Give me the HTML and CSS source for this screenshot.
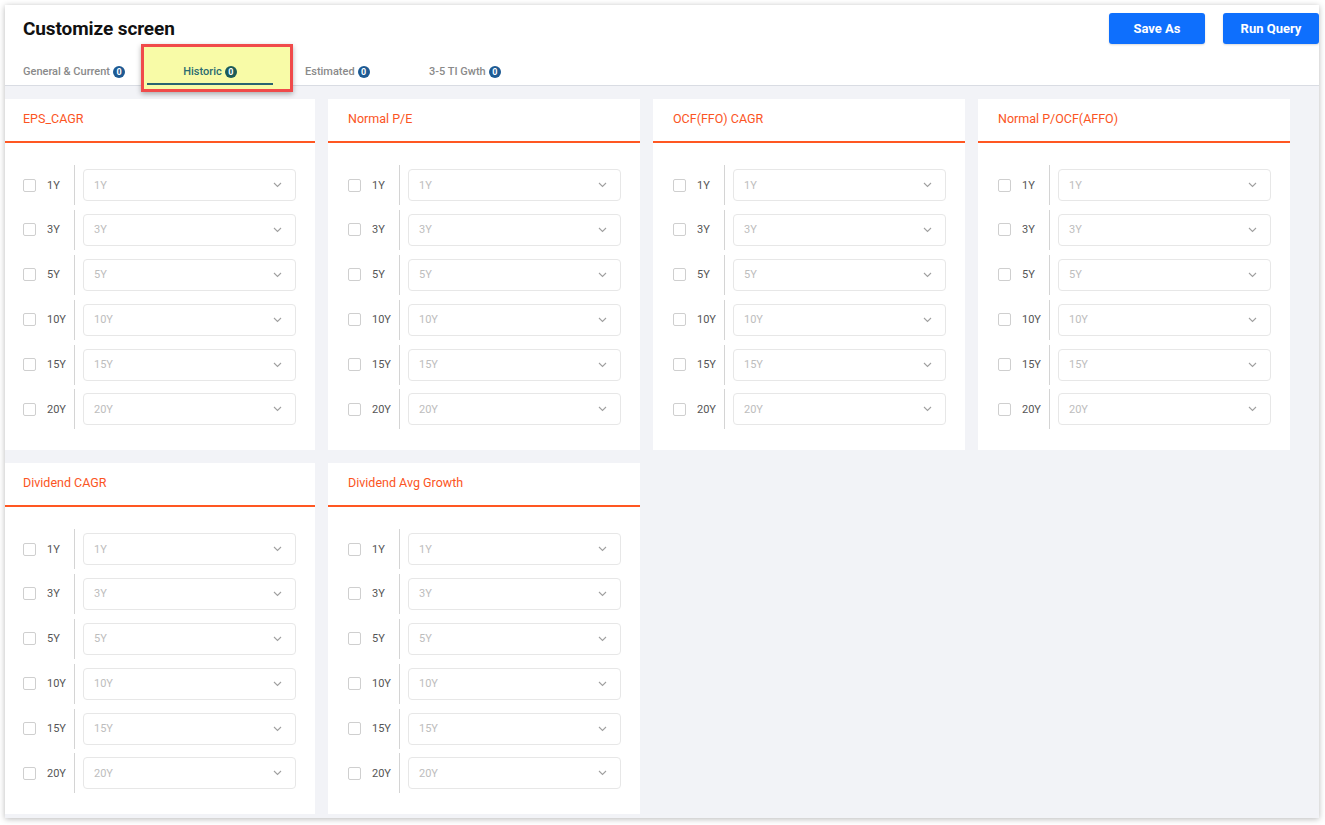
FILE: index.html
```html
<!DOCTYPE html>
<html>
<head>
<meta charset="utf-8">
<link rel="stylesheet" href="styles.css">
</head>
<body>
<div class="window">
  <header class="head">
    <div class="head-left">
      <h1 class="title">Customize screen</h1>
      <nav class="tabs">
        <div class="tab tab-general">General &amp; Current <span class="badge">0</span></div>
        <div class="tab tab-historic active">Historic <span class="badge">0</span></div>
        <div class="tab tab-estimated">Estimated <span class="badge">0</span></div>
        <div class="tab tab-gwth">3-5 TI Gwth <span class="badge">0</span></div>
      </nav>
    </div>
    <div class="head-actions">
      <button class="btn">Save As</button>
      <button class="btn">Run Query</button>
    </div>
  </header>
  <main class="content">
    <div class="grid" id="grid"></div>
  </main>
</div>
<script src="app.js"></script>
</body>
</html>
```
FILE: app.js
```js
const titles = ["EPS_CAGR", "Normal P/E", "OCF(FFO) CAGR", "Normal P/OCF(AFFO)", "Dividend CAGR", "Dividend Avg Growth"];
const periods = ["1Y", "3Y", "5Y", "10Y", "15Y", "20Y"];
const chevron = '<svg class="chev" width="9" height="6" viewBox="0 0 9 6"><polyline points="1,1 4.5,4.5 8,1" fill="none" stroke="#a0a0a0" stroke-width="1.1"/></svg>';
const grid = document.getElementById("grid");
grid.innerHTML = titles.map(t => `
  <section class="card">
    <div class="card-head">${t}</div>
    <div class="card-body">
      ${periods.map(p => `
        <div class="row">
          <span class="check"></span>
          <span class="label">${p}</span>
          <span class="divider"></span>
          <div class="select"><span>${p}</span>${chevron}</div>
        </div>`).join("")}
    </div>
  </section>`).join("");
```
FILE: styles.css
```css
* { box-sizing: border-box; }
html, body { margin: 0; padding: 0; background: #ffffff; }
body {
  font-family: Roboto, "Liberation Sans", Arial, sans-serif;
  color: #222;
  width: 1325px;
  height: 825px;
  overflow: hidden;
}
.window {
  margin: 5px 0 0 5px;
  width: 1314px;
  height: 813px;
  background: #f2f3f7;
  box-shadow: 0 1px 6px rgba(0, 0, 0, 0.28);
  overflow: hidden;
  display: flex;
  flex-direction: column;
}
.head {
  background: #fff;
  height: 81px;
  border-bottom: 1px solid #d9dce3;
  display: flex;
  justify-content: space-between;
  align-items: flex-start;
  flex-shrink: 0;
}
.head-left { padding-left: 18px; }
.title {
  margin: 12px 0 0 0;
  font-size: 19px;
  line-height: 24px;
  font-weight: 700;
  color: #111;
  letter-spacing: -0.1px;
}
.tabs {
  display: flex;
  margin-top: 18px;
  height: 26px;
}
.tab {
  font-size: 11px;
  font-weight: 500;
  color: #8a8a8a;
  line-height: 24px;
  white-space: nowrap;
  display: flex;
  align-items: center;
  height: 26px;
}
.tab-general { width: 124px; }
.tab-historic { width: 126px; justify-content: center; }
.tab-estimated { width: 124px; margin-left: 32px; }
.badge {
  display: inline-flex;
  align-items: center;
  justify-content: center;
  width: 12px;
  height: 12px;
  border-radius: 50%;
  background: #1d5a93;
  color: #fff;
  font-size: 9px;
  font-weight: 700;
  margin-left: 3px;
  line-height: 1;
}
.tab.active {
  position: relative;
  z-index: 0;
  color: #2b6c70;
}
.tab.active .badge { background: #1b5b59; }
.tab.active::before {
  content: "";
  position: absolute;
  left: -6px;
  right: -20px;
  top: -15px;
  bottom: -7px;
  background: #f8fba7;
  border: 3px solid #f04a4a;
  box-shadow: 0 2px 5px rgba(0, 0, 0, 0.3);
  z-index: -1;
}
.tab.active::after {
  content: "";
  position: absolute;
  left: 0;
  right: 0;
  bottom: 0;
  height: 2px;
  background: #2a6470;
}
.head-actions {
  display: flex;
  gap: 18px;
  margin-top: 8px;
}
.btn {
  width: 96px;
  height: 31px;
  border: none;
  border-radius: 3px;
  background: #0e6ffd;
  color: #fff;
  font-family: Roboto, "Liberation Sans", Arial, sans-serif;
  font-size: 13px;
  font-weight: 700;
  box-shadow: 0 1px 2px rgba(0, 0, 0, 0.15);
}
.content {
  flex: 1;
  padding-top: 13px;
  overflow: hidden;
}
.grid {
  margin-left: -2px;
  display: grid;
  grid-template-columns: repeat(4, 312px);
  column-gap: 13px;
  row-gap: 13px;
}
.card {
  background: #fff;
  height: 351px;
}
.card-head {
  height: 44px;
  padding: 12px 0 0 20px;
  font-size: 12.5px;
  line-height: 16px;
  color: #fb5423;
  border-bottom: 2px solid #ff5722;
}
.card-body {
  padding: 22px 19px 0 20px;
  display: flex;
  flex-direction: column;
  gap: 4.9px;
}
.row {
  height: 40px;
  display: flex;
  align-items: center;
}
.check {
  width: 13px;
  height: 13px;
  border: 1px solid #cfcfcf;
  border-radius: 2px;
  flex-shrink: 0;
}
.label {
  width: 27px;
  margin-left: 11px;
  font-size: 11px;
  color: #555;
}
.divider {
  width: 1px;
  height: 40px;
  background: #d4d4d4;
  margin-right: 8px;
}
.select {
  flex: 1;
  height: 32px;
  border: 1px solid #e7e7e7;
  border-radius: 4px;
  display: flex;
  align-items: center;
  justify-content: space-between;
  padding: 0 13px 0 10px;
  font-size: 11px;
  color: #bdbdbd;
}
.chev { display: block; }
```
